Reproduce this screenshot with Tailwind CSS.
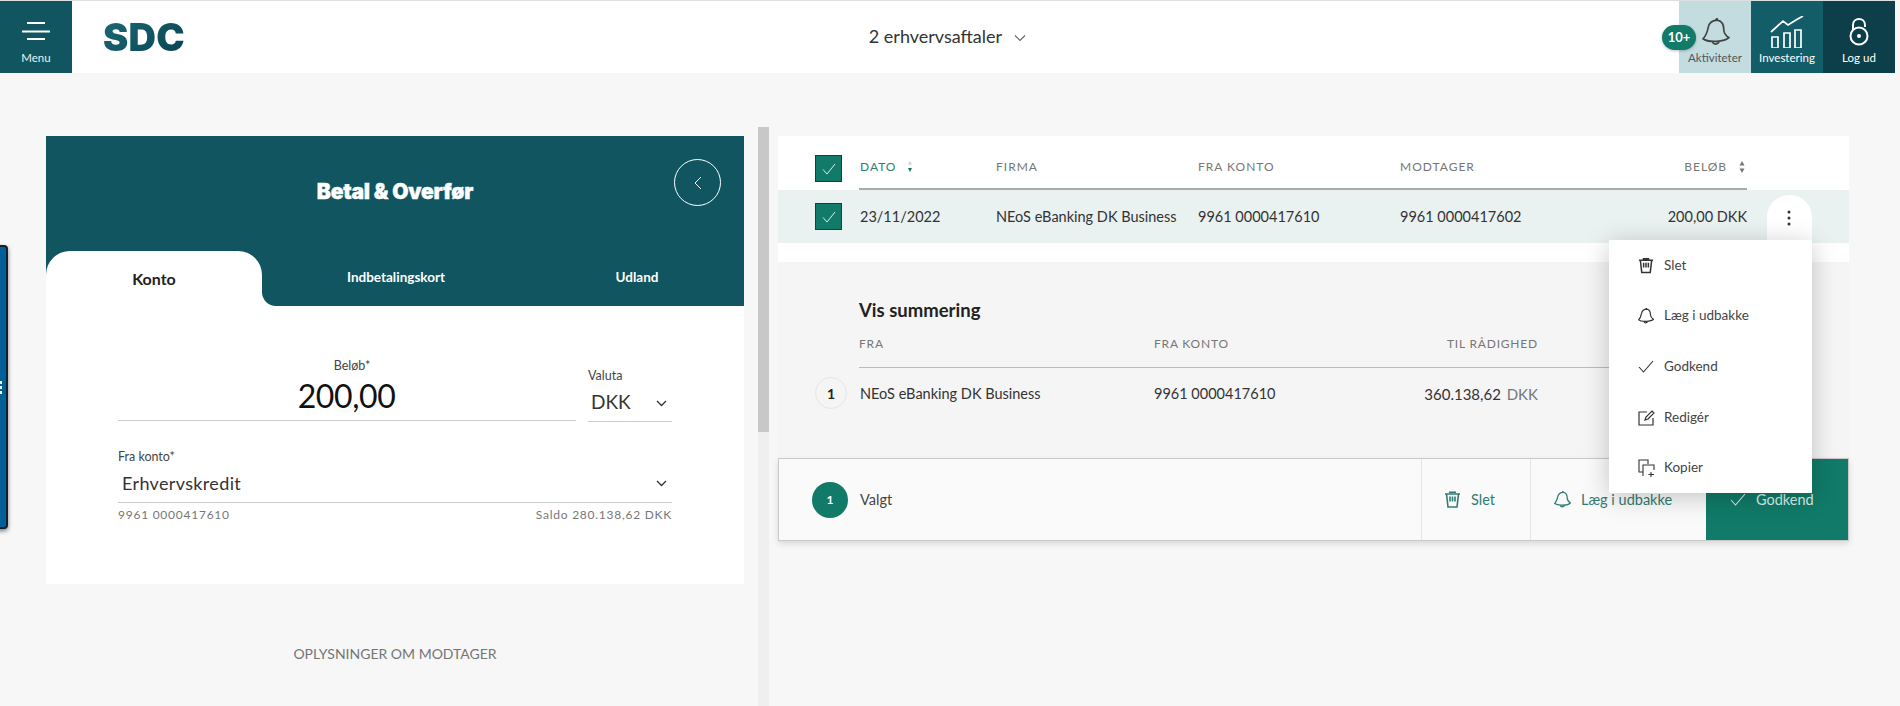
<!DOCTYPE html>
<html>
  <head>
    <meta charset="UTF-8" />
    <script src="https://cdn.jsdelivr.net/npm/@tailwindcss/browser@4"></script>
    <title>Betal &amp; Overfør</title>
  </head>
  <body class="relative w-[1900px] h-[706px] overflow-hidden bg-[#f7f7f7] font-['Lato',sans-serif] text-[#333]">
    <!-- top bar -->
    <header class="flex h-[73px] w-[1895px] border-t border-[#dcdfe1] bg-white">
      <div class="flex w-[72px] flex-col items-center bg-[#10555f] pb-[8px] text-white">
        <svg class="mt-[21px]" width="28" height="20" viewBox="0 0 28 20" fill="none" stroke="#fff" stroke-width="2"><path d="M5 1h18M0 9.500h28M5 17h18" /></svg>
        <span class="mt-auto text-[11.500px] leading-[15px] text-[#e6f3f3]">Menu</span>
      </div>
      <div class="ml-[31px] mt-[14px] bg-gradient-to-br from-[#1c6b78] to-[#063c49] bg-clip-text font-['Inter',sans-serif] text-[38px] leading-[44px] font-black tracking-[0.2px] text-transparent">SDC</div>
      <div class="ml-[684px] mt-[21px] flex h-[28px] items-center text-[18px] text-[#333]">
        2 erhvervsaftaler
        <svg class="ml-[12px] mt-[3px]" width="12" height="8" viewBox="0 0 12 8" fill="none" stroke="#666" stroke-width="1.200"><path d="M1 1.500l5 5 5-5" /></svg>
      </div>
      <div class="ml-auto flex">
        <div class="flex w-[72px] flex-col items-center bg-[#c3dce0] pb-[8px] text-[#555]">
          <svg class="mt-[17px] ml-[2px]" width="28" height="28" viewBox="0 0 27 27" fill="none" stroke="#444" stroke-width="1.600"><path d="M1 20C4 17 5 14 6 9 7 4 11 2 15 2c4 1 6 5 6 9 0 4 2 6 5 8-4 4-20 5-25 1zM10 23c1 3 5 3 7-1M13 2l2-2" /></svg>
          <span class="mt-auto text-[11.500px] leading-[15px]">Aktiviteter</span>
        </div>
        <div class="flex w-[72px] flex-col items-center bg-[#135d69] pb-[8px] text-white">
          <svg class="mt-[15px]" width="34" height="32" viewBox="0 0 34 32" fill="none" stroke="#fff" stroke-width="1.700"><path d="M1 16L13 5l5 4 8-5 7-4M2 21h6v11H2zM14 17h6v15h-6zM25 14h6v18h-6z" /></svg>
          <span class="mt-auto text-[11.500px] leading-[15px]">Investering</span>
        </div>
        <div class="flex w-[72px] flex-col items-center bg-[#0c3f4a] pb-[8px] text-white">
          <svg class="mt-[17px]" width="22" height="28" viewBox="0 0 22 28" fill="none" stroke="#fff" stroke-width="2"><path d="M5 12V7c0-4 3-6 6-6s6 2 6 6v2" /><circle cx="11" cy="18" r="8.500" /><circle cx="11" cy="18" r="1" fill="#fff" /></svg>
          <span class="mt-auto text-[11.500px] leading-[15px]">Log ud</span>
        </div>
      </div>
    </header>

    <main class="flex pl-[46px]">
      <!-- left column -->
      <section class="mt-[63px] w-[698px] shrink-0">
        <div class="relative h-[170px] bg-[#10555f] text-white">
          <h1 class="pt-[44px] text-center font-['Inter',sans-serif] text-[21px] leading-[24px] font-black tracking-[-0.2px] [-webkit-text-stroke:0.4px_white]">Betal &amp; Overfør</h1>
          <div class="absolute top-[23px] left-[628px] flex h-[47px] w-[47px] items-center justify-center rounded-full border border-white">
            <svg width="8" height="14" viewBox="0 0 8 14" fill="none" stroke="#fff" stroke-width="1"><path d="M7 1L1 7l6 6" /></svg>
          </div>
          <div class="absolute right-0 bottom-0 left-0 flex h-[55px]">
            <div class="flex w-[216px] items-center justify-center rounded-t-[24px] bg-white text-[16px] font-bold text-[#222]">Konto</div>
            <div class="absolute bottom-0 left-[216px] h-[14px] w-[14px] bg-white"></div>
            <div class="relative flex flex-1 rounded-bl-[14px] bg-[#10555f] pb-[3px] text-[13.500px] font-bold">
              <div class="flex w-[268px] items-center justify-center">Indbetalingskort</div>
              <div class="flex flex-1 items-center justify-center">Udland</div>
            </div>
          </div>
        </div>

        <div class="h-[278px] bg-white px-[72px] pt-[52px]">
          <div class="flex items-start">
            <div class="w-[458px] border-b border-[#ccc] text-center">
              <div class="pl-[10px] text-[12.500px] leading-[16px] text-[#444]">Beløb*</div>
              <div class="-mt-[2px] pr-[1px] text-[32px] leading-[48px] tracking-[-0.4px] text-[#111]">200,00</div>
            </div>
            <div class="ml-[12px] mt-[10px] w-[84px] border-b border-[#ccc]">
              <div class="text-[12.500px] leading-[16px] text-[#444]">Valuta</div>
              <div class="flex h-[37px] items-center justify-between pr-[5px] pl-[3px] text-[19px] text-[#333]">
                DKK
                <svg class="mt-[2px]" width="11" height="7" viewBox="0 0 11 7" fill="none" stroke="#333" stroke-width="1.300"><path d="M1 1l4.500 4.500L10 1" /></svg>
              </div>
            </div>
          </div>
          <div class="mt-[27px] text-[12.500px] leading-[16px] text-[#444]">Fra konto*</div>
          <div class="flex h-[38px] items-center justify-between border-b border-[#ccc] pr-[5px] pl-[4px] text-[18px] tracking-[0.35px] text-[#333]">
            Erhvervskredit
            <svg width="11" height="7" viewBox="0 0 11 7" fill="none" stroke="#333" stroke-width="1.300"><path d="M1 1l4.500 4.500L10 1" /></svg>
          </div>
          <div class="mt-[4px] flex justify-between text-[12px] leading-[15px] tracking-[0.75px] text-[#777]">
            <span>9961 0000417610</span>
            <span>Saldo 280.138,62 DKK</span>
          </div>
        </div>

        <div class="h-[122px] bg-[#f7f7f7] pt-[60px] text-center text-[14px] leading-[20px] text-[#757575]">OPLYSNINGER OM MODTAGER</div>
      </section>

      <!-- scrollbar between the columns -->
      <div class="mt-[54px] ml-[14px] h-[579px] w-[11px] shrink-0 bg-[#efefef]">
        <div class="h-[305px] bg-[#c8c8c8]"></div>
      </div>

      <!-- right column -->
      <section class="relative mt-[63px] ml-[9px] w-[1071px] shrink-0">
        <div class="bg-white pb-[19px]">
          <div class="flex h-[54px] pl-[37px]">
            <div class="mt-[19px] flex h-[27px] w-[27px] items-center justify-center border border-[#1f3b3a] bg-[#117a68]">
              <svg width="14" height="12" viewBox="0 0 14 12" fill="none" stroke="#d5efe8" stroke-width="1"><path d="M1 6.500L5 11l8-10" /></svg>
            </div>
            <div class="ml-[17px] grid w-[888px] grid-cols-[136px_202px_202px_1fr] items-center border-b-2 border-[#aaa] pt-[9px] pl-[1px] text-[12px] tracking-[1px] text-[#777]">
              <div class="flex items-center text-[#2f7d72]">DATO
                <svg class="ml-[11px]" width="6" height="11" viewBox="0 0 6 11"><path d="M3 0l2 3.500H1z" fill="#ccc" /><path d="M3 11L1 7h4z" fill="#117a68" /></svg>
              </div>
              <div>FIRMA</div>
              <div>FRA KONTO</div>
              <div class="grid grid-cols-[1fr_auto] items-center">
                <div>MODTAGER</div>
                <div class="flex items-center">BELØB
                  <svg class="mr-[2px] ml-[12px]" width="6" height="12" viewBox="0 0 6 12"><path d="M3 0l2.500 4.500h-5zM3 12L.5 7.500h5z" fill="#777" /></svg>
                </div>
              </div>
            </div>
          </div>
          <div class="flex h-[53px] items-center bg-[#e9f1f1] pl-[37px] text-[14.500px] text-[#333]">
            <div class="flex h-[27px] w-[27px] items-center justify-center border border-[#1f3b3a] bg-[#117a68]">
              <svg width="14" height="12" viewBox="0 0 14 12" fill="none" stroke="#d5efe8" stroke-width="1"><path d="M1 6.500L5 11l8-10" /></svg>
            </div>
            <div class="ml-[17px] grid w-[888px] grid-cols-[136px_202px_202px_1fr] pl-[1px]">
              <div>23/11/2022</div>
              <div>NEoS eBanking DK Business</div>
              <div>9961 0000417610</div>
              <div class="flex justify-between"><span>9961 0000417602</span><span>200,00 DKK</span></div>
            </div>
          </div>
        </div>

        <div class="h-[196px] bg-[#f5f5f5] pl-[37px]">
          <h2 class="pl-[44px] pt-[36px] text-[18.500px] leading-[24px] font-bold text-[#222]">Vis summering</h2>
          <div class="ml-[44px] mt-[14px] grid h-[32px] w-[845px] grid-cols-[295px_384px] border-b border-[#bbb] text-[12px] leading-[16px] tracking-[0.8px] text-[#777]">
            <div>FRA</div>
            <div class="flex justify-between"><span>FRA KONTO</span><span>TIL RÅDIGHED</span></div>
          </div>
          <div class="mt-[9px] flex items-center text-[14.500px] text-[#333]">
            <div class="flex h-[32px] w-[32px] items-center justify-center rounded-full border border-[#e6e6e6] text-[14px] font-bold text-[#222]">1</div>
            <div class="ml-[13px] grid grid-cols-[294px_384px] pt-[3px]">
              <div>NEoS eBanking DK Business</div>
              <div class="flex justify-between"><span>9961 0000417610</span><span class="text-[15px]">360.138,62 <span class="ml-[2px] text-[#777]">DKK</span></span></div>
            </div>
          </div>
        </div>

        <div class="flex h-[83px] items-stretch border border-[#c9c9c9] bg-[#fafafa] shadow-[0_3px_6px_rgba(0,0,0,0.12)]">
          <div class="flex flex-1 items-center pl-[33px] text-[14.500px] text-[#444]">
            <div class="flex h-[36px] w-[36px] items-center justify-center rounded-full bg-[#117a68] text-[12px] font-bold text-white">1</div>
            <span class="ml-[12px]">Valgt</span>
          </div>
          <div class="flex w-[109px] items-center border-l border-[#e5e5e5] pl-[22px] text-[14.500px] text-[#2f7d72]">
            <svg width="17" height="17" viewBox="0 0 17 17" fill="none" stroke="#2f7d72" stroke-width="1.600"><path d="M1 3h15M5 1.200h7M2.500 3l1.500 13h9l1.500-13M6 5.500v5M8.500 5.500v5M11 5.500v5" /></svg>
            <span class="ml-[10px]">Slet</span>
          </div>
          <div class="flex w-[176px] items-center border-l border-[#e5e5e5] pl-[23px] text-[14.500px] text-[#2f7d72]">
            <svg width="17" height="17" viewBox="0 0 27 27" fill="none" stroke="#2f7d72" stroke-width="2"><path d="M1 20C4 17 5 14 6 9 7 4 11 2 15 2c4 1 6 5 6 9 0 4 2 6 5 8-4 4-20 5-25 1zM10 23c1 3 5 3 7-1M13 2l2-2" /></svg>
            <span class="ml-[10px]">Læg i udbakke</span>
          </div>
          <div class="flex w-[142px] items-center bg-[#117a68] pl-[24px] text-[14.500px] text-[#d5efe8]">
            <svg width="16" height="13" viewBox="0 0 16 13" fill="none" stroke="#d5efe8" stroke-width="1.100"><path d="M1 7l4.500 5L15 1" /></svg>
            <span class="ml-[10px]">Godkend</span>
          </div>
        </div>

        <!-- row action menu, open over the table -->
        <div class="absolute top-[59px] left-[989px] flex h-[50px] w-[45px] justify-center rounded-t-[22px] bg-white pt-[15px] pr-[1px]">
          <svg width="4" height="16" viewBox="0 0 4 16" fill="#333"><circle cx="2" cy="2" r="1.500" /><circle cx="2" cy="8" r="1.500" /><circle cx="2" cy="14" r="1.500" /></svg>
        </div>
        <div class="absolute top-[104px] left-[831px] w-[203px] bg-white text-[13.500px] text-[#444] shadow-[0_4px_24px_rgba(0,0,0,0.22)]">
          <div class="flex h-[50px] items-center pl-[29px]">
            <svg width="16" height="17" viewBox="0 0 17 17" fill="none" stroke="#333" stroke-width="1.600"><path d="M1 3h15M5 1.200h7M2.500 3l1.500 13h9l1.500-13M6 5.500v5M8.500 5.500v5M11 5.500v5" /></svg>
            <span class="ml-[10px]">Slet</span>
          </div>
          <div class="flex h-[51px] items-center pl-[29px]">
            <svg width="16" height="16" viewBox="0 0 27 27" fill="none" stroke="#333" stroke-width="2"><path d="M1 20C4 17 5 14 6 9 7 4 11 2 15 2c4 1 6 5 6 9 0 4 2 6 5 8-4 4-20 5-25 1zM10 23c1 3 5 3 7-1M13 2l2-2" /></svg>
            <span class="ml-[10px]">Læg i udbakke</span>
          </div>
          <div class="flex h-[51px] items-center pl-[29px]">
            <svg width="16" height="13" viewBox="0 0 16 13" fill="none" stroke="#333" stroke-width="1.100"><path d="M1 7l4.500 5L15 1" /></svg>
            <span class="ml-[10px]">Godkend</span>
          </div>
          <div class="flex h-[50px] items-center pl-[29px]">
            <svg width="17" height="17" viewBox="0 0 17 17" fill="none" stroke="#333" stroke-width="1.200"><path d="M9 3H1v13h14V9M7 11l1-3 6-6 2 2-6 6z" /></svg>
            <span class="ml-[9px]">Redigér</span>
          </div>
          <div class="flex h-[51px] items-center pl-[29px]">
            <svg width="18" height="18" viewBox="0 0 18 18" fill="none" stroke="#333" stroke-width="1.100"><path d="M5 13H1V1h9v4M5 17V6h11v5M13 13v5M10.500 15.500h5.500" /></svg>
            <span class="ml-[8px]">Kopier</span>
          </div>
        </div>
      </section>
    </main>

    <!-- count badge on the bell -->
    <div class="absolute top-[25px] left-[1662px] flex h-[25px] w-[34px] items-center justify-center rounded-full bg-[#117a68] text-[13px] font-bold text-white shadow-[0_1px_3px_rgba(0,0,0,0.25)]">10+</div>

    <!-- collapsed side tab at the window edge -->
    <div class="absolute top-[245px] -left-[4px] flex h-[284px] w-[12px] items-center justify-start rounded-r-[4px] border-2 border-[#12202b] bg-[#005f96] shadow-[0_2px_4px_rgba(0,0,0,0.5)]">
      <div class="ml-[1px] mt-[1px] flex flex-col gap-[2px]">
        <span class="block h-[3px] w-[3px] bg-white"></span>
        <span class="block h-[3px] w-[3px] bg-white"></span>
        <span class="block h-[3px] w-[3px] bg-white"></span>
      </div>
    </div>
  </body>
</html>
